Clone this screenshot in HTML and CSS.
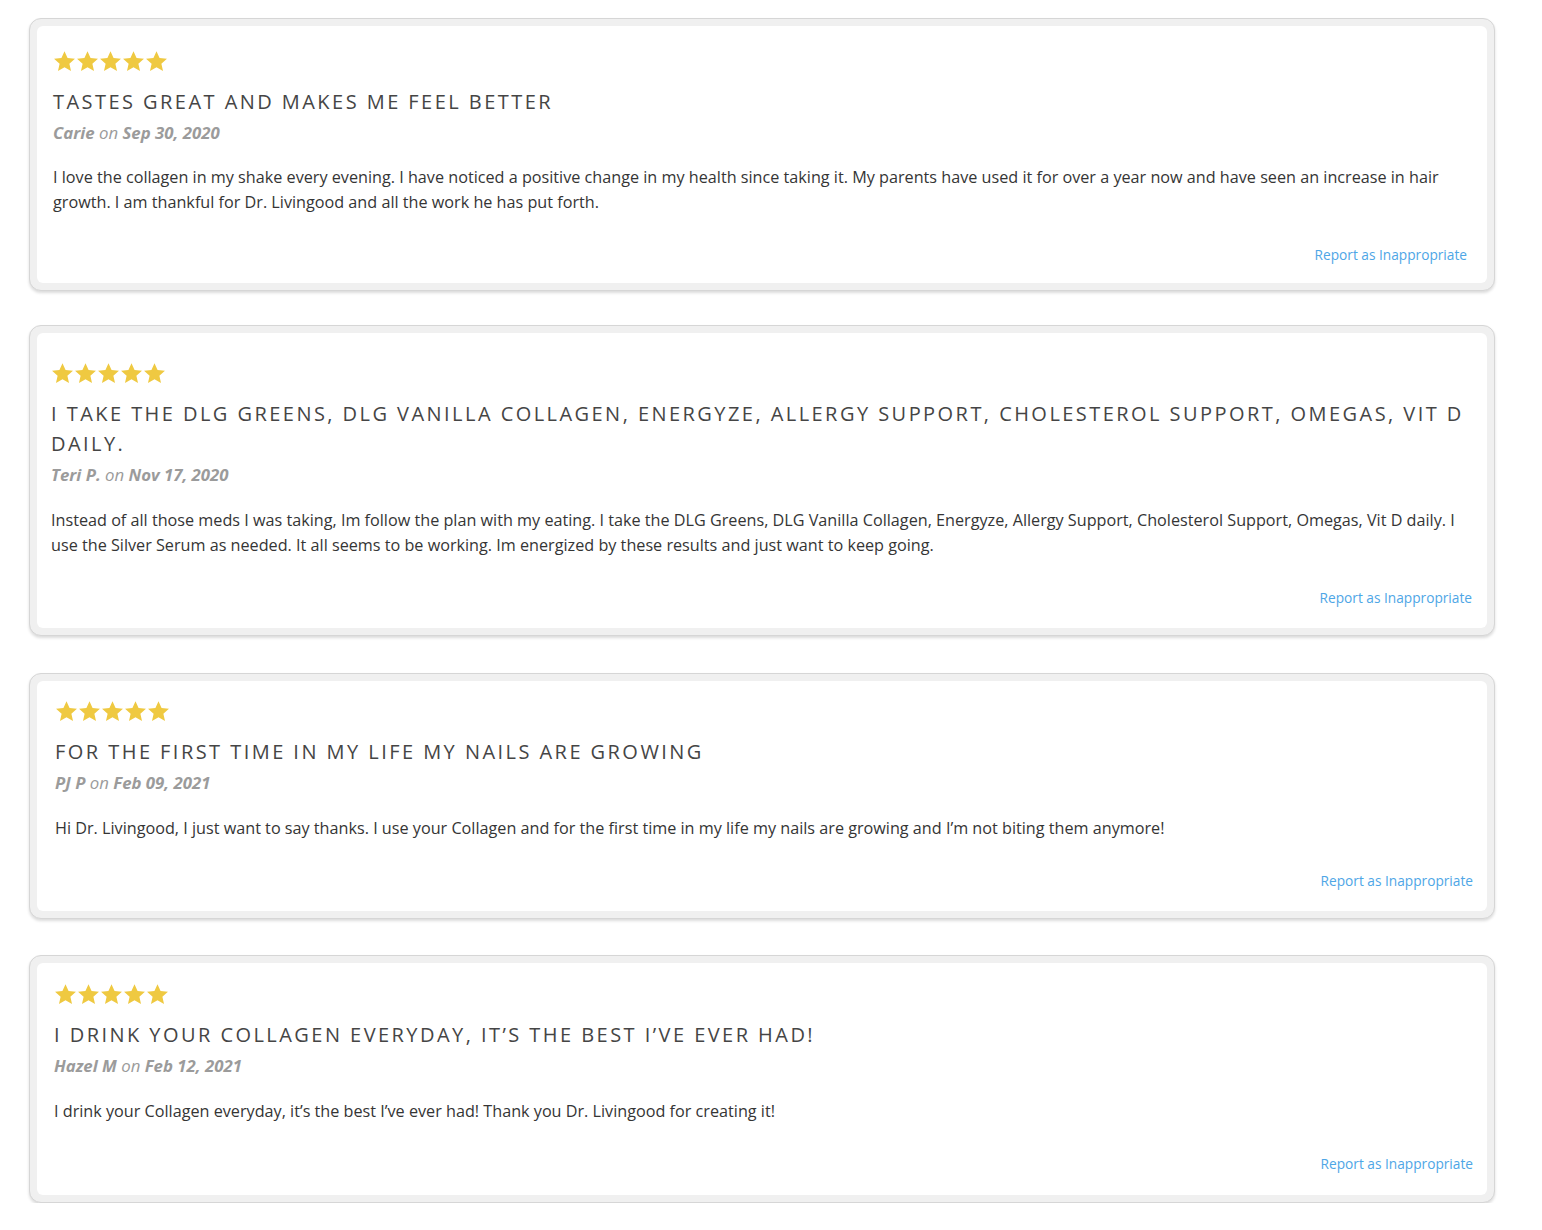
FILE: index.html
```html
<!DOCTYPE html>
<html lang="en">
<head>
<meta charset="utf-8">
<title>Reviews</title>
<link rel="stylesheet" href="styles.css">
</head>
<body>
<svg width="0" height="0" class="defs">
  <defs>
    <symbol id="star" viewBox="0 0 24 24">
      <path d="M12 1.2l3.2 7.1 7.7.8-5.8 5.2 1.7 7.6L12 18l-6.8 3.9 1.7-7.6L1.1 9.1l7.7-.8z"/>
    </symbol>
  </defs>
</svg>
<main class="reviews">
  <article class="card card-1">
    <div class="inner">
      <div class="stars">
        <svg class="star"><use href="#star"/></svg><svg class="star"><use href="#star"/></svg><svg class="star"><use href="#star"/></svg><svg class="star"><use href="#star"/></svg><svg class="star"><use href="#star"/></svg>
      </div>
      <h2 class="title">Tastes great and makes me feel better</h2>
      <p class="meta"><b>Carie</b> on <b>Sep 30, 2020</b></p>
      <p class="body">I love the collagen in my shake every evening. I have noticed a positive change in my health since taking it. My parents have used it for over a year now and have seen an increase in hair growth. I am thankful for Dr. Livingood and all the work he has put forth.</p>
      <div class="report"><a href="#">Report as Inappropriate</a></div>
    </div>
  </article>
  <article class="card card-2">
    <div class="inner">
      <div class="stars">
        <svg class="star"><use href="#star"/></svg><svg class="star"><use href="#star"/></svg><svg class="star"><use href="#star"/></svg><svg class="star"><use href="#star"/></svg><svg class="star"><use href="#star"/></svg>
      </div>
      <h2 class="title">I take the DLG Greens, DLG Vanilla Collagen, Energyze, Allergy Support, Cholesterol Support, Omegas, Vit D daily.</h2>
      <p class="meta"><b>Teri P.</b> on <b>Nov 17, 2020</b></p>
      <p class="body">Instead of all those meds I was taking, Im follow the plan with my eating. I take the DLG Greens, DLG Vanilla Collagen, Energyze, Allergy Support, Cholesterol Support, Omegas, Vit D daily. I use the Silver Serum as needed. It all seems to be working. Im energized by these results and just want to keep going.</p>
      <div class="report"><a href="#">Report as Inappropriate</a></div>
    </div>
  </article>
  <article class="card card-3">
    <div class="inner">
      <div class="stars">
        <svg class="star"><use href="#star"/></svg><svg class="star"><use href="#star"/></svg><svg class="star"><use href="#star"/></svg><svg class="star"><use href="#star"/></svg><svg class="star"><use href="#star"/></svg>
      </div>
      <h2 class="title">For the first time in my life my nails are growing</h2>
      <p class="meta"><b>PJ P</b> on <b>Feb 09, 2021</b></p>
      <p class="body">Hi Dr. Livingood, I just want to say thanks. I use your Collagen and for the first time in my life my nails are growing and I’m not biting them anymore!</p>
      <div class="report"><a href="#">Report as Inappropriate</a></div>
    </div>
  </article>
  <article class="card card-4">
    <div class="inner">
      <div class="stars">
        <svg class="star"><use href="#star"/></svg><svg class="star"><use href="#star"/></svg><svg class="star"><use href="#star"/></svg><svg class="star"><use href="#star"/></svg><svg class="star"><use href="#star"/></svg>
      </div>
      <h2 class="title">I drink your Collagen everyday, it’s the best I’ve ever had!</h2>
      <p class="meta"><b>Hazel M</b> on <b>Feb 12, 2021</b></p>
      <p class="body">I drink your Collagen everyday, it’s the best I’ve ever had! Thank you Dr. Livingood for creating it!</p>
      <div class="report"><a href="#">Report as Inappropriate</a></div>
    </div>
  </article>
</main>
</body>
</html>
```
FILE: styles.css
```css
html, body {
  margin: 0;
  padding: 0;
  background: #fff;
}
body {
  font-family: "Open Sans", "Noto Sans", sans-serif;
  color: #333;
}
.defs {
  position: absolute;
  width: 0;
  height: 0;
}
.reviews {
  width: 1466px;
  margin: 18px 0 0 29px;
  display: flex;
  flex-direction: column;
}
.card {
  box-sizing: border-box;
  border: 1px solid #d6d6d6;
  border-radius: 12px;
  padding: 7px;
  background: #f0f0f0;
  box-shadow: 0 2px 3px rgba(0, 0, 0, 0.14);
}
.card-2 { margin-top: 34px; }
.card-3 { margin-top: 37px; }
.card-4 { margin-top: 36px; }
.inner {
  background: #fff;
  border-radius: 6px;
  padding: 24px 20px 18px 16px;
}
.card-2 .inner { padding: 29px 15px 20px 14px; }
.card-3 .inner { padding: 19px 14px 20px 18px; }
.card-4 .inner { padding: 20px 14px 21px 17px; }
.card-2 .body,
.card-3 .body,
.card-4 .body { margin-top: 22px; }
.stars {
  display: flex;
  gap: 0;
  height: 23px;
}
.star {
  width: 23px;
  height: 23px;
  fill: #efc941;
}
.title {
  margin: 14px 0 0;
  font-size: 20px;
  line-height: 30px;
  font-weight: 400;
  letter-spacing: 2.45px;
  text-transform: uppercase;
  color: #454545;
}
.meta {
  margin: 5px 0 0;
  font-size: 16.8px;
  line-height: 22px;
  font-style: italic;
  color: #9b9b9b;
}
.meta b {
  font-weight: 700;
}
.body {
  margin: 21px 0 0;
  font-size: 16.2px;
  line-height: 25px;
  color: #353535;
}
.report {
  margin-top: 30px;
  text-align: right;
  font-size: 13.7px;
  line-height: 20px;
}
.report a {
  color: #4ea6e6;
  text-decoration: none;
}
```
